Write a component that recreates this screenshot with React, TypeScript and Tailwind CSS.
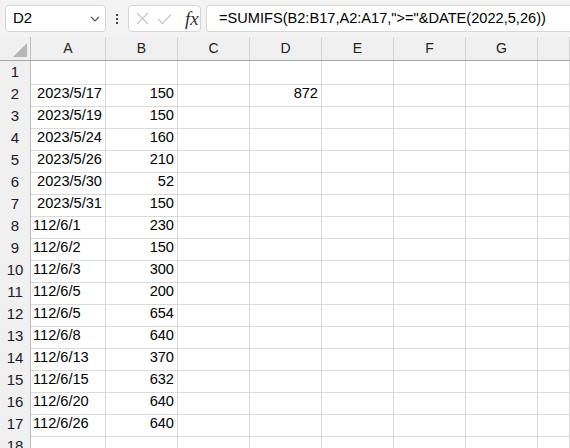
import React from 'react';

// --- DATA ---
type Row = { a: string; aDate?: boolean; b: string; d?: string };

const rows: Row[] = [
  { a: '', b: '' },
  { a: '2023/5/17', aDate: true, b: '150', d: '872' },
  { a: '2023/5/19', aDate: true, b: '150' },
  { a: '2023/5/24', aDate: true, b: '160' },
  { a: '2023/5/26', aDate: true, b: '210' },
  { a: '2023/5/30', aDate: true, b: '52' },
  { a: '2023/5/31', aDate: true, b: '150' },
  { a: '112/6/1', b: '230' },
  { a: '112/6/2', b: '150' },
  { a: '112/6/3', b: '300' },
  { a: '112/6/5', b: '200' },
  { a: '112/6/5', b: '654' },
  { a: '112/6/8', b: '640' },
  { a: '112/6/13', b: '370' },
  { a: '112/6/15', b: '632' },
  { a: '112/6/20', b: '640' },
  { a: '112/6/26', b: '640' },
  { a: '', b: '' },
];

const cols = ['A', 'B', 'C', 'D', 'E', 'F', 'G', ''];

const gridCols = 'grid grid-cols-[31px_75px_72px_72px_72px_72px_72px_72px_1fr]';

// --- TOOLBAR ---
const FormulaBar = () => (
  <div className="h-[37px] bg-[#f3f3f3] flex items-start pt-[5px] pl-[5px] gap-0">
    <div className="w-[101px] h-[27px] bg-white border border-[#d6d6d6] rounded-[4px] flex items-center justify-between pl-[7px] pr-[4px]">
      <span className="text-[15px] text-black">D2</span>
      <svg width="12" height="8" viewBox="0 0 12 8">
        <path d="M2 2 L6 6 L10 2" fill="none" stroke="#555" strokeWidth="1.2" />
      </svg>
    </div>
    <div className="w-[22px] h-[27px] flex flex-col items-center justify-center gap-[2px]">
      <span className="w-[2px] h-[2px] bg-[#444]" />
      <span className="w-[2px] h-[2px] bg-[#444]" />
      <span className="w-[2px] h-[2px] bg-[#444]" />
    </div>
    <div className="w-[73px] h-[27px] bg-white border border-[#d6d6d6] rounded-[4px] flex items-center pl-[7px] gap-[8px]">
      <svg width="13" height="13" viewBox="0 0 13 13">
        <path d="M1 1 L12 12 M12 1 L1 12" stroke="#c4c4c4" strokeWidth="1.1" />
      </svg>
      <svg width="15" height="12" viewBox="0 0 15 12">
        <path d="M1 6 L5.5 10.5 L14 1.5" fill="none" stroke="#c4c4c4" strokeWidth="1.1" />
      </svg>
      <span className="ml-[5px] text-[19px] italic text-[#333] leading-none" style={{ fontFamily: '"Liberation Serif", serif' }}>fx</span>
    </div>
    <div className="ml-[5px] flex-1 h-[27px] bg-white border border-r-0 border-[#d6d6d6] rounded-l-[4px] flex items-center pl-[12px]">
      <span className="text-[14.6px] text-black whitespace-nowrap">=SUMIFS(B2:B17,A2:A17,"&gt;="&amp;DATE(2022,5,26))</span>
    </div>
  </div>
);

// --- SHEET ---
const Sheet = () => (
  <div className="bg-white">
    <div className={`${gridCols} h-[24px] bg-[#f0f0f0] border-b border-[#a6a6a6]`}>
      <div className="relative border-r border-[#bdbdbd]">
        <div className="absolute right-[3px] bottom-[3px] w-0 h-0 border-l-[14px] border-l-transparent border-b-[14px] border-b-[#b7b7b7]" />
      </div>
      {cols.map((c, i) => (
        <div key={i} className="flex items-center justify-center border-r border-[#d4d4d4] text-[14px] text-[#222]">
          {c}
        </div>
      ))}
    </div>
    {rows.map((r, i) => (
      <div key={i} className={`${gridCols} h-[22px]`}>
        <div className="bg-[#f0f0f0] border-r border-b border-[#bdbdbd] border-b-[#d4d4d4] flex items-center justify-center text-[15px] text-[#1a1a2a]">
          {i + 1}
        </div>
        <div className={`border-r border-b border-[#dadada] flex items-center text-[14.6px] text-black ${r.aDate ? 'justify-end pr-[3px]' : 'pl-[2px]'}`}>
          {r.a}
        </div>
        <div className="border-r border-b border-[#dadada] flex items-center justify-end pr-[3px] text-[14.6px] text-black">{r.b}</div>
        <div className="border-r border-b border-[#dadada]" />
        <div className="border-r border-b border-[#dadada] flex items-center justify-end pr-[3px] text-[14.6px] text-black">{r.d}</div>
        <div className="border-r border-b border-[#dadada]" />
        <div className="border-r border-b border-[#dadada]" />
        <div className="border-r border-b border-[#dadada]" />
        <div className="border-r border-b border-[#dadada]" />
      </div>
    ))}
  </div>
);

export default function App() {
  return (
    <div className="w-[570px] h-[448px] overflow-hidden bg-white" style={{ fontFamily: '"Liberation Sans", Arial, sans-serif' }}>
      <FormulaBar />
      <Sheet />
    </div>
  );
}
